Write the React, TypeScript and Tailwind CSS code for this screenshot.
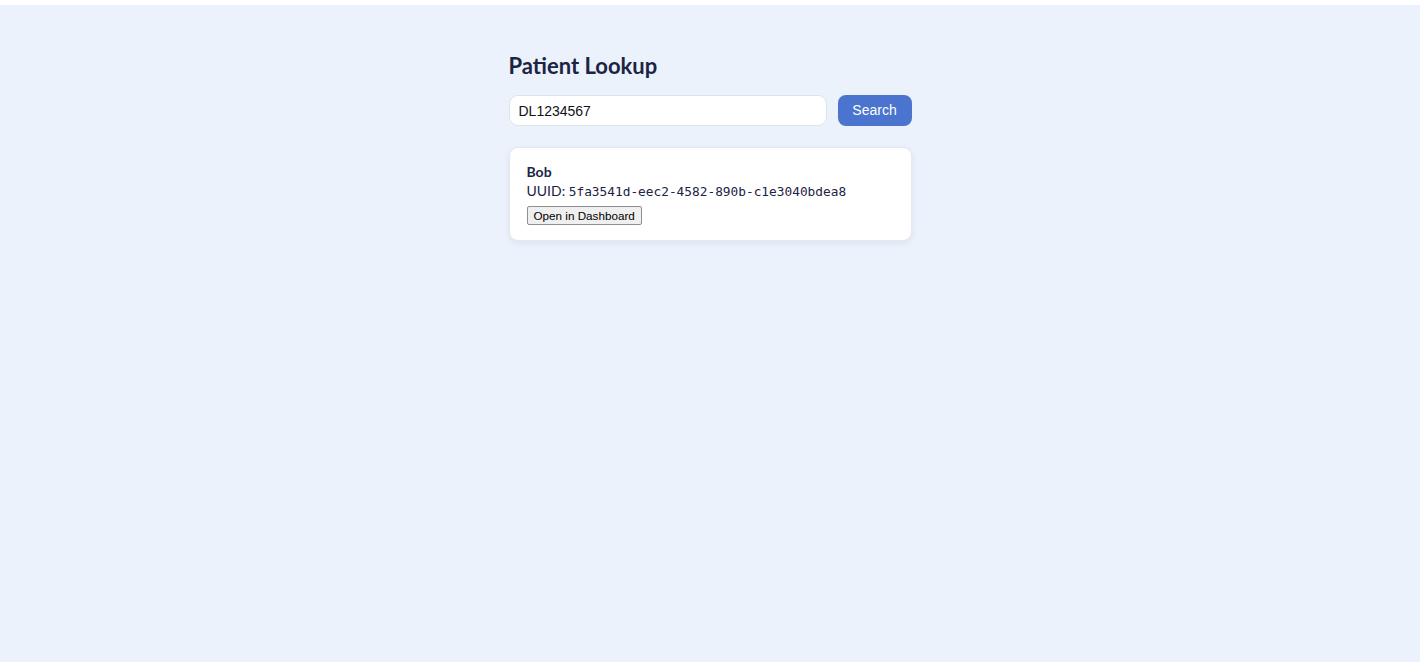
import { useState } from 'react';

export default function App() {
    const [query, setQuery] = useState('DL1234567');

    return (
        <div className="min-h-screen bg-white pt-[5px]">
            <div className="min-h-[657px] bg-[#ecf2fc] pt-[46px]" style={{ fontFamily: 'Lato, "Open Sans", sans-serif' }}>
                <div className="mx-auto w-[403px]">
                    <h1 className="text-[22px] font-bold leading-[30px] text-[#1b2443]">Patient Lookup</h1>

                    <div className="mt-[14px] flex items-center gap-[11px]">
                        <input
                            value={query}
                            onChange={(e) => setQuery(e.target.value)}
                            className="h-[31px] flex-1 rounded-[9px] border border-[#dde3ec] bg-white px-[9px] text-[14px] text-[#111] outline-none"
                            style={{ fontFamily: '"Liberation Sans", Arial, sans-serif' }}
                        />
                        <button
                            className="h-[31px] w-[74px] rounded-[8px] bg-[#4a74cd] text-[14px] text-white"
                            style={{ fontFamily: '"Liberation Sans", Arial, sans-serif' }}
                        >
                            Search
                        </button>
                    </div>

                    <div className="mt-[21px] rounded-[9px] border border-[#e4e8ef] bg-white px-[17px] pt-[15px] pb-[14px] shadow-[0_2px_6px_rgba(30,40,70,0.08)]">
                        <div className="text-[14px] font-bold leading-[18px] text-[#1b2443]">Bob</div>
                        <div className="text-[14px] leading-[20px] text-[#1b2443]">
                            UUID: <code className="text-[12.8px]" style={{ fontFamily: '"DejaVu Sans Mono", monospace' }}>5fa3541d-eec2-4582-890b-c1e3040bdea8</code>
                        </div>
                        <button
                            className="mt-[4px] h-[19px] rounded-[2px] border border-[#8f8f8f] bg-[#efefef] px-[6px] text-[11.7px] leading-[17px] text-black"
                            style={{ fontFamily: '"Liberation Sans", Arial, sans-serif' }}
                        >
                            Open in Dashboard
                        </button>
                    </div>
                </div>
            </div>
        </div>
    );
}
